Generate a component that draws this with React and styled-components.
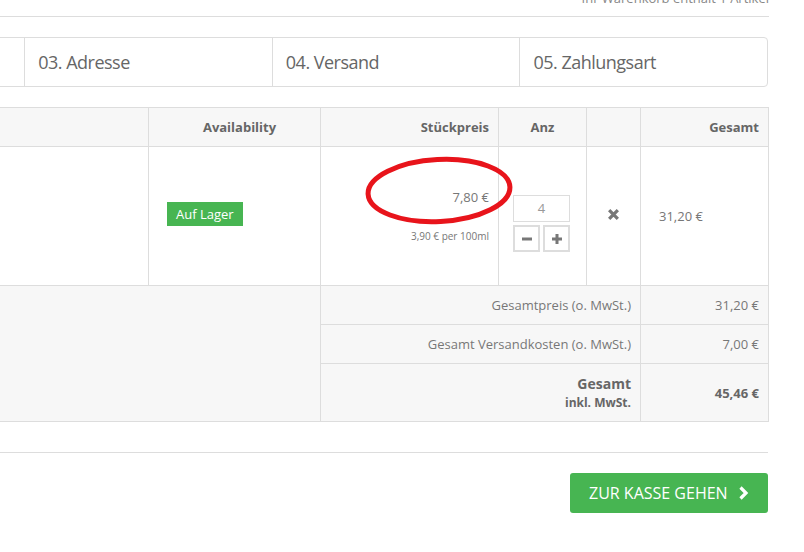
import styled, { createGlobalStyle } from "styled-components";

const GlobalStyle = createGlobalStyle`
	html, body {
		margin: 0;
		padding: 0;
		background: #fff;
		overflow: hidden;
	}
	body {
		font-family: "Open Sans", "Liberation Sans", sans-serif;
		font-size: 13px;
		color: #777;
	}
`;

const Page = styled.div`
	width: 1240px;
	margin-left: -472px;
`;

const CartInfo = styled.div`
	margin-top: -11px;
	padding-bottom: 9px;
	line-height: 18px;
	text-align: right;
	border-bottom: 1px solid #ddd;
	color: #888;
	margin-right: -1px;
`;

const Steps = styled.ol`
	list-style: none;
	margin: 20px 0 0;
	padding: 0;
	display: grid;
	grid-template-columns: repeat(5, 1fr);
	border: 1px solid #ddd;
	border-radius: 4px;
	height: 48px;
`;

const Step = styled.li`
	display: flex;
	align-items: center;
	padding: 0 13px;
	border-left: ${(p) => (p.$first ? "none" : "1px solid #ddd")};
	font-size: 18px;
	letter-spacing: -0.5px;
	color: #666;
`;

const Table = styled.table`
	margin-top: 20px;
	width: 1240px;
	border-collapse: collapse;
	table-layout: fixed;
`;

const Th = styled.th`
	height: 38px;
	padding: 0 9px 0 ${(p) => p.$pl || 9}px;
	background: #f7f7f7;
	border: 1px solid #ddd;
	font-weight: 700;
	color: #666;
	text-align: ${(p) => p.$align || "left"};
`;

const Td = styled.td`
	position: relative;
	height: 138px;
	padding: 0 9px 0 ${(p) => p.$pl || 9}px;
	border: 1px solid #ddd;
	vertical-align: middle;
	text-align: ${(p) => p.$align || "left"};
`;

const SumTd = styled.td`
	height: ${(p) => p.$h || 38}px;
	padding: 0 9px;
	background: #f7f7f7;
	border: 1px solid #ddd;
	text-align: right;
	vertical-align: middle;
	font-weight: ${(p) => (p.$bold ? 700 : 400)};
	color: ${(p) => (p.$bold ? "#666" : "#777")};
`;

const Badge = styled.div`
	display: inline-flex;
	align-items: center;
	height: 24px;
	margin-top: -4px;
	padding: 0 9px;
	background: #47b552;
	color: #fff;
	font-size: 13px;
	vertical-align: top;
`;

const Price = styled.div`
	margin-top: -2px;
	margin-bottom: 23px;
`;

const UnitPrice = styled.div`
	font-size: 10px;
`;

const Marker = styled.svg`
	position: absolute;
	left: 44px;
	top: 9px;
	overflow: visible;
`;

const Qty = styled.div`
	display: grid;
	grid-template-columns: 27px 27px;
	gap: 3px;
	width: 57px;
	margin-top: 15px;
`;

const QtyInput = styled.div`
	grid-column: 1 / 3;
	height: 25px;
	border: 1px solid #ddd;
	color: #999;
	text-align: center;
	line-height: 25px;
	font-size: 13px;
`;

const QtyButton = styled.div`
	height: 23px;
	border: 2px solid #ddd;
	display: flex;
	align-items: center;
	justify-content: center;
`;

const TotalLabel = styled.div`
	font-size: 14px;
	line-height: 20px;
`;

const TotalSub = styled.div`
	font-size: 12px;
	line-height: 18px;
`;

const Rule = styled.hr`
	margin: 30px 0 0;
	border: 0;
	border-top: 1px solid #ddd;
`;

const Actions = styled.div`
	display: flex;
	justify-content: flex-end;
	margin-top: 20px;
`;

const CheckoutButton = styled.button`
	display: flex;
	align-items: center;
	gap: 10px;
	height: 40px;
	width: 198px;
	padding: 0 19px;
	border: 0;
	border-radius: 3px;
	background: #47b552;
	color: #fff;
	font-family: "Open Sans", "Liberation Sans", sans-serif;
	font-size: 16px;
	text-transform: uppercase;
`;

function Glyph({ d, w = 12 }) {
	return (
		<svg width={w} height={w} viewBox="0 0 12 12">
			<path d={d} stroke="#777" strokeWidth="3" fill="none" />
		</svg>
	);
}

function App() {
	return (
		<>
			<GlobalStyle />
			<Page>
				<CartInfo>Ihr Warenkorb enthält 1 Artikel</CartInfo>
				<Steps>
					<Step $first>01. Warenkorb</Step>
					<Step>02. Anmelden</Step>
					<Step>03. Adresse</Step>
					<Step>04. Versand</Step>
					<Step>05. Zahlungsart</Step>
				</Steps>
				<Table>
					<colgroup>
						<col style={{ width: 620 }} />
						<col style={{ width: 172 }} />
						<col style={{ width: 178 }} />
						<col style={{ width: 88 }} />
						<col style={{ width: 54 }} />
						<col style={{ width: 128 }} />
					</colgroup>
					<thead>
						<tr>
							<Th>Produkt</Th>
							<Th $align="center" $pl={19}>Availability</Th>
							<Th $align="right">Stückpreis</Th>
							<Th $align="center">Anz</Th>
							<Th></Th>
							<Th $align="right">Gesamt</Th>
						</tr>
					</thead>
					<tbody>
						<tr>
							<Td></Td>
							<Td $pl={18}>
								<Badge>Auf Lager</Badge>
							</Td>
							<Td $align="right">
								<Price>7,80 €</Price>
								<UnitPrice>3,90 € per 100ml</UnitPrice>
								<Marker width="148" height="69" viewBox="0 0 148 69">
									<ellipse cx="74" cy="34.5" rx="71" ry="31" fill="none" stroke="#e8141b" strokeWidth="5" transform="rotate(-3 74 34.5)" />
								</Marker>
							</Td>
							<Td $pl={14}>
								<Qty>
									<QtyInput>4</QtyInput>
									<QtyButton><Glyph d="M1 6H11" /></QtyButton>
									<QtyButton><Glyph d="M1 6H11M6 1V11" /></QtyButton>
								</Qty>
							</Td>
							<Td $align="center">
								<Glyph d="M2 2L10 10M10 2L2 10" w={13} />
							</Td>
							<Td $pl={18}>31,20 €</Td>
						</tr>
						<tr>
							<SumTd colSpan={2} rowSpan={3}></SumTd>
							<SumTd colSpan={3}>Gesamtpreis (o. MwSt.)</SumTd>
							<SumTd>31,20 €</SumTd>
						</tr>
						<tr>
							<SumTd colSpan={3}>Gesamt Versandkosten (o. MwSt.)</SumTd>
							<SumTd>7,00 €</SumTd>
						</tr>
						<tr>
							<SumTd colSpan={3} $h={57} $bold>
								<TotalLabel>Gesamt</TotalLabel>
								<TotalSub>inkl. MwSt.</TotalSub>
							</SumTd>
							<SumTd $h={57} $bold>45,46 €</SumTd>
						</tr>
					</tbody>
				</Table>
				<Rule />
				<Actions>
					<CheckoutButton>
						Zur Kasse gehen
						<svg width="11" height="14" viewBox="0 0 11 14">
							<path d="M2.5 1.5L8 7L2.5 12.5" stroke="#fff" strokeWidth="3.2" fill="none" />
						</svg>
					</CheckoutButton>
				</Actions>
			</Page>
		</>
	);
}

export default App;
